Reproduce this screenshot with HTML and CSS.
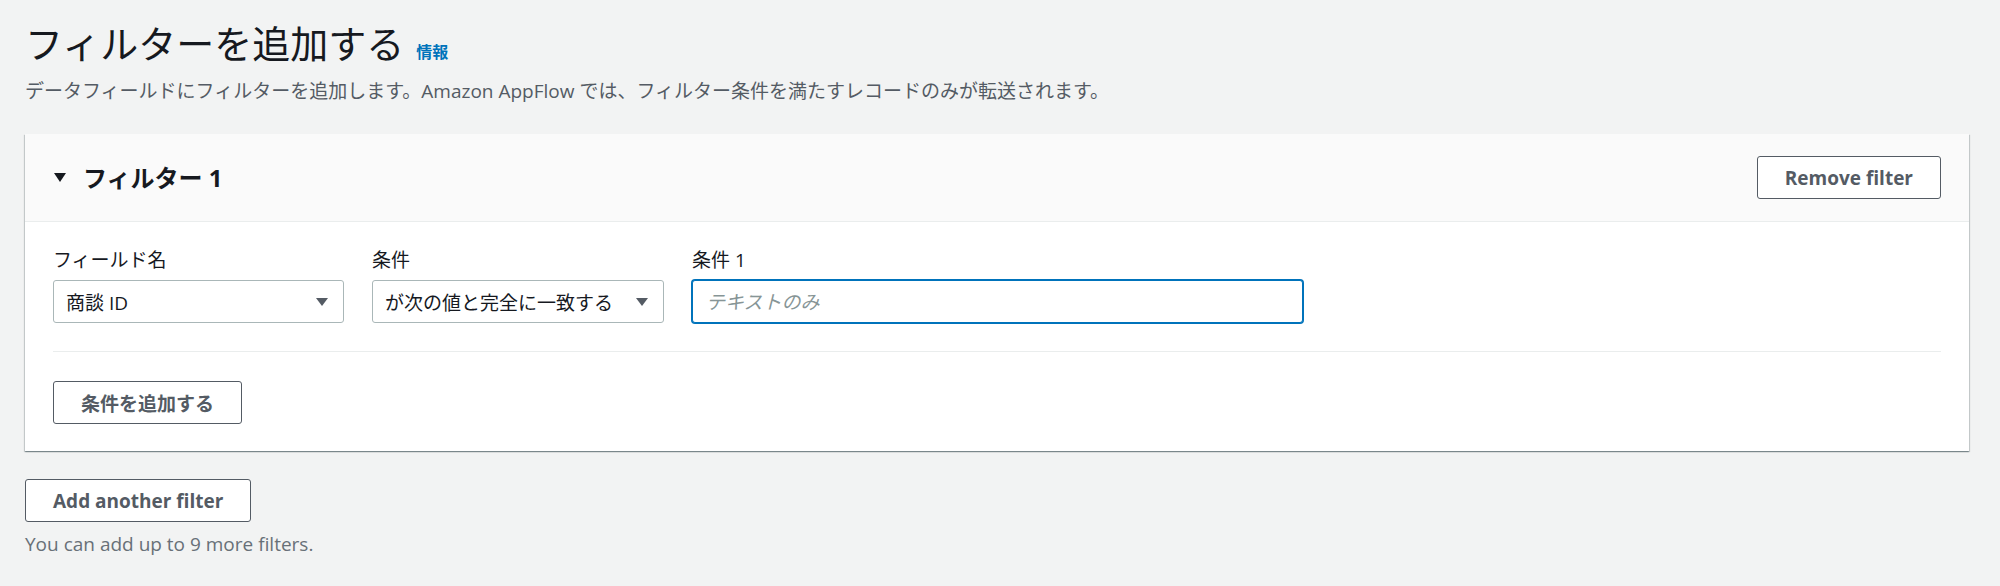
FILE: index.html
```html
<!DOCTYPE html>
<html lang="ja">
<head>
    <meta charset="UTF-8">
    <title>フィルターを追加する</title>
    <link rel="stylesheet" href="styles.css">
</head>

<body>
<div class="page">
    <h1 class="title">フィルターを追加する<a class="info" href="#">情報</a></h1>
    <p class="desc">データフィールドにフィルターを追加します。Amazon AppFlow では、フィルター条件を満たすレコードのみが転送されます。</p>

    <div class="panel">
        <div class="panel-header">
            <div class="panel-title">
                <svg class="caret" width="12" height="9" viewBox="0 0 12 9"><path d="M0 0h12L6 9z"/></svg>
                <h2>フィルター 1</h2>
            </div>
            <button class="btn">Remove filter</button>
        </div>
        <div class="panel-body">
            <div class="fields">
                <div class="field">
                    <label>フィールド名</label>
                    <div class="select">
                        <span>商談 ID</span>
                        <svg class="arrow" width="12" height="8" viewBox="0 0 12 8"><path d="M0 0h12L6 8z"/></svg>
                    </div>
                </div>
                <div class="field">
                    <label>条件</label>
                    <div class="select">
                        <span>が次の値と完全に一致する</span>
                        <svg class="arrow" width="12" height="8" viewBox="0 0 12 8"><path d="M0 0h12L6 8z"/></svg>
                    </div>
                </div>
                <div class="field">
                    <label>条件 1</label>
                    <input class="text-input" type="text" placeholder="テキストのみ">
                </div>
            </div>
            <div class="divider"></div>
            <button class="btn">条件を追加する</button>
        </div>
    </div>

    <div class="footer">
        <button class="btn">Add another filter</button>
        <div class="hint">You can add up to 9 more filters.</div>
    </div>
</div>
</body>
</html>
```

FILE: styles.css
```css
body {
    background: #f2f3f3;
    color: #16191f;
    font-family: "Open Sans", "Noto Sans CJK JP", sans-serif;
    font-size: 19px;
    margin: 0;
}

.page {
    padding: 21px 31px 0 25px;
}

.title {
    font-size: 38px;
    font-weight: 400;
    line-height: 44px;
    margin: 0;
}

.info {
    color: #0073bb;
    font-size: 16px;
    font-weight: 700;
    line-height: 1;
    margin-left: 12px;
    text-decoration: none;
}

.desc {
    color: #545b64;
    line-height: 29px;
    margin: 12px 0 0;
}

.panel {
    background: #fff;
    box-shadow: 0 1px 1px 0 rgba(0, 28, 36, .3), 1px 1px 1px 0 rgba(0, 28, 36, .15), -1px 1px 1px 0 rgba(0, 28, 36, .15);
    margin-top: 28px;
}

.panel-header {
    align-items: center;
    background: #fafafa;
    border-bottom: 1px solid #eaeded;
    display: flex;
    justify-content: space-between;
    padding: 22px 28px 22px 29px;
}

.panel-title {
    align-items: center;
    display: flex;
    gap: 17px;
}

.caret {
    fill: #16191f;
}

.panel-title h2 {
    font-size: 24px;
    font-weight: 700;
    line-height: 32px;
    margin: 0;
}

.btn {
    background: #fff;
    border: 1px solid #545b64;
    border-radius: 3px;
    box-sizing: border-box;
    color: #545b64;
    font-family: inherit;
    font-size: 19px;
    font-weight: 700;
    height: 43px;
    padding: 0 27px;
}

.panel-body {
    padding: 24px 28px 27px;
}

.fields {
    column-gap: 28px;
    display: grid;
    grid-template-columns: 291px 292px 611px;
}

.field label {
    display: block;
    line-height: 29px;
    margin-bottom: 5px;
}

.select {
    align-items: center;
    border: 1px solid #aab7b8;
    border-radius: 3px;
    box-sizing: border-box;
    display: flex;
    height: 43px;
    justify-content: space-between;
    padding: 0 15px 0 12px;
}

.arrow {
    fill: #545b64;
}

.text-input {
    border: 1px solid #0073bb;
    border-radius: 3px;
    box-shadow: 0 0 0 1px #0073bb;
    box-sizing: border-box;
    color: #16191f;
    display: block;
    font-family: inherit;
    font-size: 19px;
    height: 43px;
    outline: none;
    padding: 0 13px;
    width: 100%;
}

.text-input::placeholder {
    color: #879596;
    font-style: italic;
}

.divider {
    background: #eaeded;
    height: 1px;
    margin: 28px 0 29px;
}

.footer {
    margin-top: 28px;
}

.hint {
    color: #687078;
    line-height: 29px;
    margin-top: 8px;
}
```
